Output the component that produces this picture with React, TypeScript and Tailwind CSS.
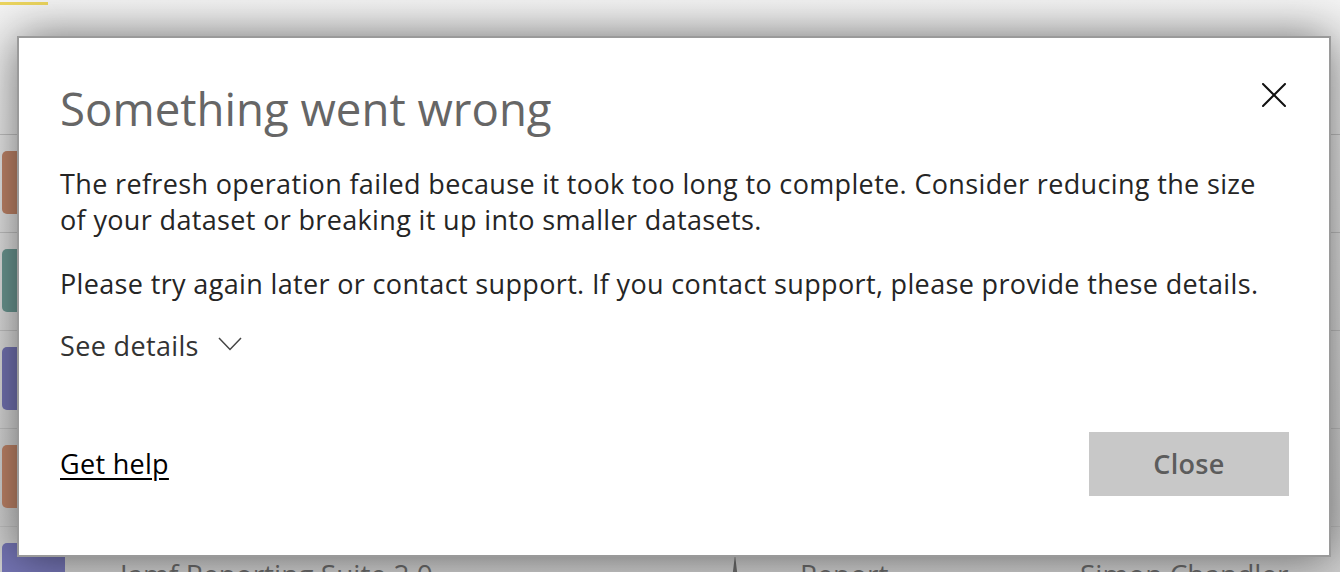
const rows = [
  { color: 'bg-[#c3876a]', name: '', type: '', owner: '' },
  { color: 'bg-[#6d9a94]', name: '', type: '', owner: '' },
  { color: 'bg-[#7575b5]', name: '', type: '', owner: '' },
  { color: 'bg-[#c3876a]', name: '', type: '', owner: '' },
  { color: 'bg-[#7575b5]', name: 'Jamf Reporting Suite 2.0', type: 'Report', owner: 'Simon Chandler' },
];

function Background() {
  return (
    <div className="flex h-full flex-col bg-gradient-to-b from-[#f4f4f4] to-[#d0d0d0]">
      <div className="h-[135px] shrink-0 border-b border-[#c4c4c4]">
        <div className="mt-[2px] h-[3px] w-[48px] bg-[#ecd55e]" />
      </div>
      {rows.map((r, i) => (
        <div key={i} className="flex h-[98px] shrink-0 items-start border-b border-[#c4c4c4] pt-[16px]">
          <div className={`ml-[2px] h-[63px] w-[63px] rounded-[5px] ${r.color}`} />
          <div className="ml-[55px] mt-[10px] w-[610px] text-[28px] text-[#6a6a6a]">{r.name}</div>
          <div className="mt-[12px] w-[70px]">
            {r.type && (
              <svg width="10" height="40" viewBox="0 0 10 40">
                <path d="M5 0 L10 40 L0 40 Z" fill="#6a6a6a" />
              </svg>
            )}
          </div>
          <div className="mt-[10px] w-[280px] text-[28px] text-[#6a6a6a]">{r.type}</div>
          <div className="mt-[10px] text-[28px] text-[#6a6a6a]">{r.owner}</div>
        </div>
      ))}
    </div>
  );
}

export default function App() {
  return (
    <div
      className="relative h-[572px] w-[1340px] overflow-hidden"
      style={{ fontFamily: '"Open Sans", "Noto Sans", sans-serif' }}
    >
      <Background />
      <div className="absolute left-[17px] top-[36px] flex h-[521px] w-[1314px] flex-col border-2 border-[#9a9a9a] bg-white pl-[41px] pr-[40px] shadow-[0_0_45px_rgba(0,0,0,0.55)]">
        <div className="flex items-start justify-between">
          <h1 className="mt-[40px] text-[45.6px] leading-[60px] font-normal text-[#666666]">
            Something went wrong
          </h1>
          <button className="mt-[45px] mr-[3px]">
            <svg width="24" height="24" viewBox="0 0 24 24" fill="none" stroke="#111" strokeWidth="2" strokeLinecap="round">
              <path d="M1 1 L23 23 M23 1 L1 23" />
            </svg>
          </button>
        </div>
        <p className="mt-[28px] text-[27px] leading-[36px] tracking-[0.35px] text-[#252525]">
          The refresh operation failed because it took too long to complete. Consider reducing the size
          <br />
          of your dataset or breaking it up into smaller datasets.
        </p>
        <p className="mt-[28px] text-[27px] leading-[36px] tracking-[0.35px] text-[#252525]">
          Please try again later or contact support. If you contact support, please provide these details.
        </p>
        <div className="mt-[26px] flex items-center gap-[19px] text-[27px] leading-[36px] tracking-[0.35px] text-[#333333]">
          <span>See details</span>
          <svg width="24" height="14" viewBox="0 0 24 14" fill="none" stroke="#444" strokeWidth="1.5" className="-mt-[5px]">
            <path d="M1 1 L12 12.5 L23 1" />
          </svg>
        </div>
        <div className="mt-auto mb-[59px] flex items-center justify-between">
          <a className="text-[27px] leading-[36px] tracking-[0.3px] text-black underline underline-offset-[4px] decoration-[1.5px]">
            Get help
          </a>
          <button className="h-[64px] w-[200px] bg-[#c8c8c8] text-[27px] font-semibold tracking-[0.3px] text-[#5c5c5c]">
            Close
          </button>
        </div>
      </div>
    </div>
  );
}
